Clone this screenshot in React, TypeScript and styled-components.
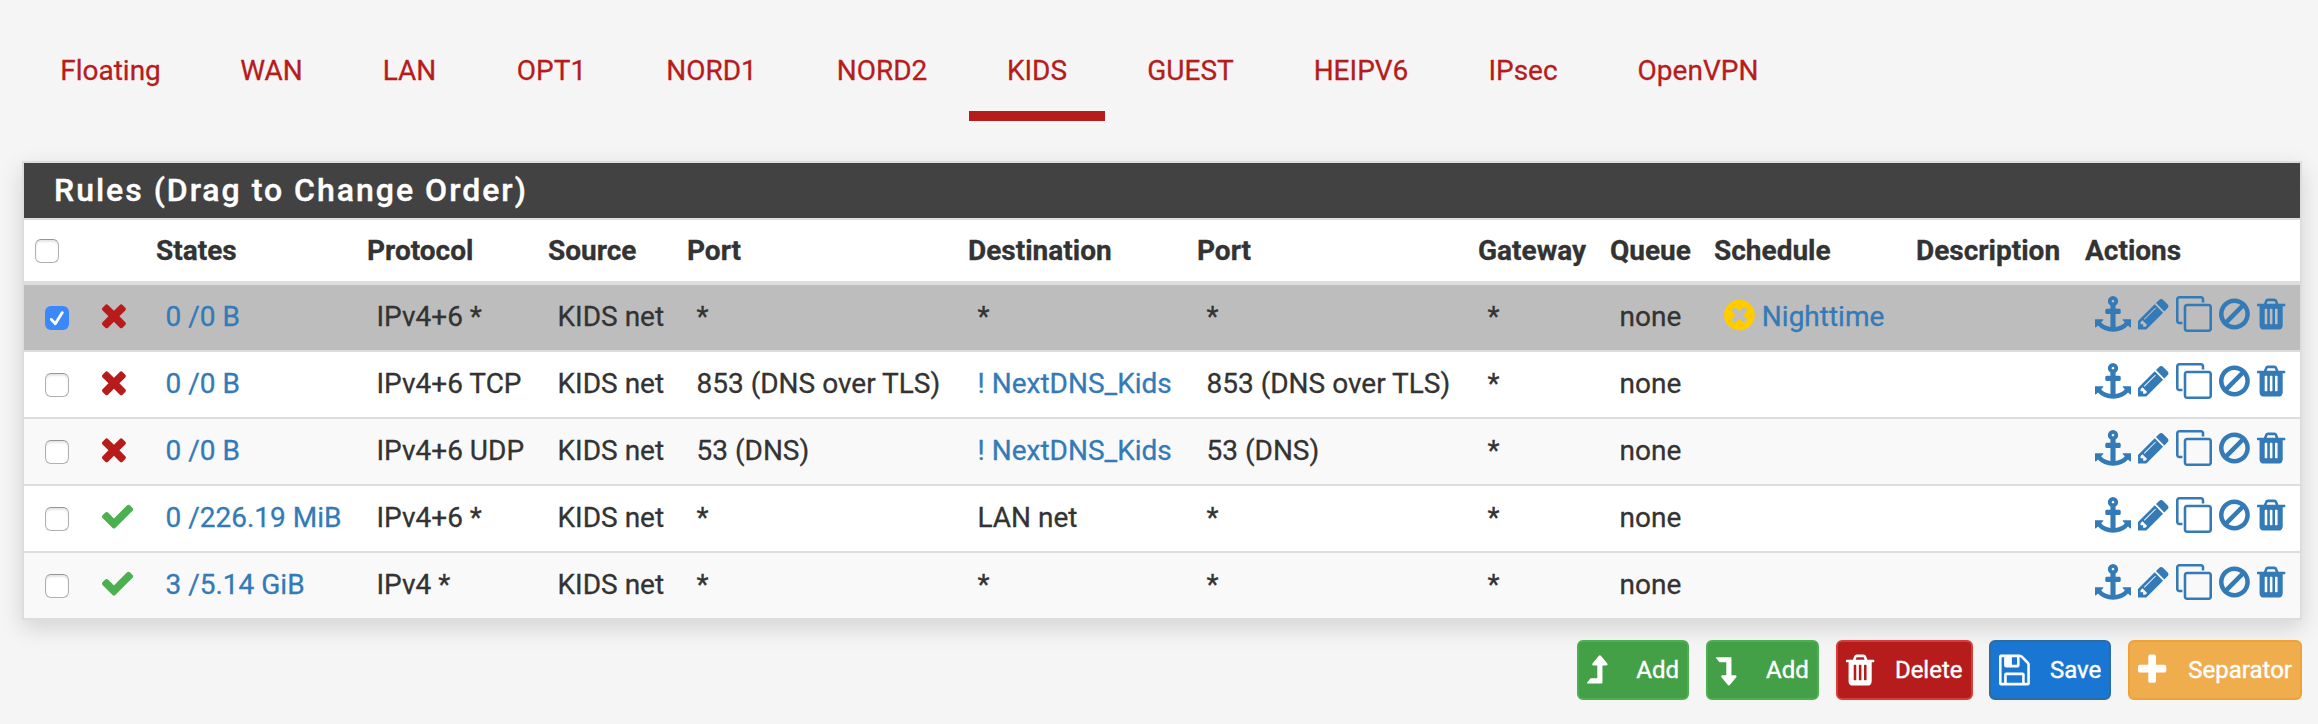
import React from 'react';
import styled, { createGlobalStyle } from 'styled-components';

const GlobalStyle = createGlobalStyle`
  * { box-sizing: border-box; }
  body {
    margin: 0;
    background: #f5f5f5;
    color: #333;
    font: 28px/40px Roboto, sans-serif;
    -webkit-text-stroke-width: 0.3px;
  }
`;

const icons = {
  anchor: 'M960 256q0-26-19-45t-45-19-45 19-19 45 19 45 45 19 45-19 19-45zm832 928v352q0 22-20 30-8 2-12 2-13 0-23-9l-93-93q-119 143-318.5 226.5t-429.5 83.5-429.5-83.5-318.5-226.5l-93 93q-9 9-23 9-4 0-12-2-20-8-20-30v-352q0-14 9-23t23-9h352q22 0 30 20 8 19-7 35l-100 100q67 91 189.5 153.5t271.5 82.5v-647h-192q-26 0-45-19t-19-45v-128q0-26 19-45t45-19h192v-163q-58-34-93-92.5t-35-128.5q0-106 75-181t181-75 181 75 75 181q0 70-35 128.5t-93 92.5v163h192q26 0 45 19t19 45v128q0 26-19 45t-45 19h-192v647q149-20 271.5-82.5t189.5-153.5l-100-100q-15-16-7-35 8-20 30-20h352q14 0 23 9t9 23z',
  pencil: 'M491 1536l91-91-235-235-91 91v107h128v128h107zm523-928q0-22-22-22-10 0-17 7l-542 542q-7 7-7 17 0 22 22 22 10 0 17-7l542-542q7-7 7-17zm-54-192l416 416-832 832h-416v-416zm683 96q0 53-37 90l-166 166-416-416 166-165q36-38 90-38 53 0 91 38l235 234q37 39 37 91z',
  clone: 'M1664 1632v-1088q0-13-9.5-22.5t-22.5-9.5h-1088q-13 0-22.5 9.5t-9.5 22.5v1088q0 13 9.5 22.5t22.5 9.5h1088q13 0 22.5-9.5t9.5-22.5zm128-1088v1088q0 66-47 113t-113 47h-1088q-66 0-113-47t-47-113v-1088q0-66 47-113t113-47h1088q66 0 113 47t47 113zm-384-384v160h-128v-160q0-13-9.5-22.5t-22.5-9.5h-1088q-13 0-22.5 9.5t-9.5 22.5v1088q0 13 9.5 22.5t22.5 9.5h160v128h-160q-66 0-113-47t-47-113v-1088q0-66 47-113t113-47h1088q66 0 113 47t47 113z',
  ban: 'M1440 893q0-161-87-295l-754 753q137 89 297 89 111 0 211.5-43.5t173.5-116.5 116-174.5 43-212.5zm-999 299l755-754q-135-91-300-91-148 0-273 73t-198 199-73 274q0 162 89 299zm1223-299q0 157-61 300t-163.5 246-245 164-298.5 61-298.5-61-245-164-163.5-246-61-300 61-299.5 163.5-245.5 245-164 298.5-61 298.5 61 245 164 163.5 245.5 61 299.5z',
  trash: 'M704 1376v-704q0-14-9-23t-23-9h-64q-14 0-23 9t-9 23v704q0 14 9 23t23 9h64q14 0 23-9t9-23zm256 0v-704q0-14-9-23t-23-9h-64q-14 0-23 9t-9 23v704q0 14 9 23t23 9h64q14 0 23-9t9-23zm256 0v-704q0-14-9-23t-23-9h-64q-14 0-23 9t-9 23v704q0 14 9 23t23 9h64q14 0 23-9t9-23zm-544-992h448l-48-117q-7-9-17-11h-317q-10 2-17 11zm928 32v64q0 14-9 23t-23 9h-96v948q0 83-47 143.5t-113 60.5h-832q-66 0-113-58.5t-47-141.5v-952h-96q-14 0-23-9t-9-23v-64q0-14 9-23t23-9h309l70-167q15-37 54-63t79-26h320q40 0 79 26t54 63l70 167h309q14 0 23 9t9 23z',
  times: 'M1490 1322q0 40-28 68l-136 136q-28 28-68 28t-68-28l-294-294-294 294q-28 28-68 28t-68-28l-136-136q-28-28-28-68t28-68l294-294-294-294q-28-28-28-68t28-68l136-136q28-28 68-28t68 28l294 294 294-294q28-28 68-28t68 28l136 136q28 28 28 68t-28 68l-294 294 294 294q28 28 28 68z',
  check: 'M1671 566q0 40-28 68l-724 724-136 136q-28 28-68 28t-68-28l-136-136-362-362q-28-28-28-68t28-68l136-136q28-28 68-28t68 28l294 295 656-657q28-28 68-28t68 28l136 136q28 28 28 68z',
  timesCircle: 'M1277 1122q0-26-19-45l-181-181 181-181q19-19 19-45 0-27-19-46l-90-90q-19-19-46-19-26 0-45 19l-181 181-181-181q-19-19-45-19-27 0-46 19l-90 90q-19 19-19 46 0 26 19 45l181 181-181 181q-19 19-19 45 0 27 19 46l90 90q19 19 46 19 26 0 45-19l181-181 181 181q19 19 45 19 27 0 46-19l90-90q19-19 19-46zm387-226q0 209-103 385.5t-279.5 279.5-385.5 103-385.5-103-279.5-279.5-103-385.5 103-385.5 279.5-279.5 385.5-103 385.5 103 279.5 279.5 103 385.5z',
  save: 'M512 1536h768v-384h-768v384zm896 0h128v-896q0-14-10-38.5t-20-34.5l-281-281q-10-10-34-20t-39-10v416q0 40-28 68t-68 28h-576q-40 0-68-28t-28-68v-416h-128v1280h128v-416q0-40 28-68t68-28h832q40 0 68 28t28 68v416zm-384-928v-320q0-13-9.5-22.5t-22.5-9.5h-192q-13 0-22.5 9.5t-9.5 22.5v320q0 13 9.5 22.5t22.5 9.5h192q13 0 22.5-9.5t9.5-22.5zm640 32v928q0 40-28 68t-68 28h-1344q-40 0-68-28t-28-68v-1344q0-40 28-68t68-28h928q40 0 88 20t76 48l280 280q28 28 48 76t20 88z',
  plus: 'M1600 736v192q0 40-28 68t-68 28h-416v416q0 40-28 68t-68 28h-192q-40 0-68-28t-28-68v-416h-416q-40 0-68-28t-28-68v-192q0-40 28-68t68-28h416v-416q0-40 28-68t68-28h192q40 0 68 28t28 68v416h416q40 0 68 28t28 68z',
  levelUp: 'M1303 635q-18 37-58 37h-192v864q0 14-9 23t-23 9h-704q-21 0-29-18-8-20 4-35l160-192q9-11 25-11h320v-640h-192q-40 0-58-37-17-37 9-68l320-384q18-22 49-22t49 22l320 384q27 32 9 68z',
  levelDown: 'M317 256h704q14 0 23 9t9 23v864h192q40 0 58 37t-10 69l-320 384q-18 22-49 22t-49-22l-320-384q-26-31-9-69 18-37 58-37h192v-640h-320q-14 0-25-11l-160-192q-13-14-4-34 9-19 29-19z',
};

type IconName = keyof typeof icons;

/* Horizontal span of each glyph inside its 1792-unit square: [left, width]. */
const spans: Record<IconName, [number, number]> = {
  anchor: [0, 1792],
  pencil: [128, 1536],
  clone: [0, 1792],
  ban: [128, 1536],
  trash: [192, 1408],
  times: [302, 1408],
  check: [121, 1792],
  timesCircle: [128, 1536],
  save: [128, 1536],
  plus: [192, 1408],
  levelUp: [284, 1024],
  levelDown: [284, 1024],
};

const Glyph = styled.svg<{ $size: number; $units: number }>`
  display: block;
  flex: none;
  overflow: visible;
  height: ${(p) => p.$size}px;
  width: ${(p) => (p.$size * p.$units) / 1792}px;
  fill: currentColor;
`;

function Icon({ name, size = 36 }: { name: IconName; size?: number }) {
  const [left, width] = spans[name];
  return (
    <Glyph $size={size} $units={width} viewBox={`${left} 0 ${width} 1792`}>
      <path d={icons[name]} />
    </Glyph>
  );
}

const Page = styled.main`
  padding: 0 16px 0 22px;
  height: 724px;
  overflow: hidden;
`;

const Tabs = styled.nav`
  display: flex;
  height: 121px;
  margin-bottom: 40px;
  padding-top: 22px;
  gap: 4px;
`;

const Tab = styled.a<{ $active?: boolean; $width: number }>`
  width: ${(p) => p.$width}px;
  padding-top: 29px;
  text-align: center;
  color: #b71c1c;
  white-space: nowrap;
  border-bottom: 10px solid ${(p) => (p.$active ? '#b71c1c' : 'transparent')};
`;

const Panel = styled.section`
  border: 2px solid #ddd;
  background: #fff;
  box-shadow: 0 8px 22px rgba(0, 0, 0, 0.14);
`;

const PanelTitle = styled.h2`
  margin: 0;
  height: 55px;
  padding-left: 30px;
  background: #424242;
  color: #fff;
  font-size: 32px;
  font-weight: 500;
  line-height: 55px;
  letter-spacing: 2px;
  -webkit-text-stroke-width: 0.4px;
`;

const Table = styled.table`
  width: 100%;
  table-layout: fixed;
  border-collapse: separate;
  border-spacing: 0;
`;

const Col = styled.col<{ $w: number }>`
  width: ${(p) => p.$w}px;
`;

const HeadCell = styled.th<{ $pad?: number }>`
  height: 65px;
  padding: 0 0 0 ${(p) => p.$pad ?? 10}px;
  border-top: 2px solid #ddd;
  border-bottom: 2px solid #ddd;
  text-align: left;
  font-weight: 700;
  white-space: nowrap;
`;

const Row = styled.tr<{ $bg: string }>`
  background: ${(p) => p.$bg};
`;

const Cell = styled.td<{ $pad?: number }>`
  height: 67px;
  padding: 0 0 2px ${(p) => p.$pad ?? 19.5}px;
  border-top: 2px solid #ddd;
  white-space: nowrap;
`;

const Link = styled.a`
  color: #337ab7;
`;

const Check = styled.span<{ $checked?: boolean; $drop: number }>`
  display: block;
  width: 24px;
  height: 24px;
  margin-top: ${(p) => p.$drop}px;
  border-radius: 6px;
  border: ${(p) => (p.$checked ? '0' : '1px solid #b0b0b0')};
  border-top-color: #949494;
  background: ${(p) => (p.$checked ? '#3b88fd' : '#fff')};
  box-shadow: ${(p) => (p.$checked ? 'none' : 'inset 0 2px 2px rgba(0, 0, 0, 0.1)')};
  svg { display: block; }
`;

const Status = styled.span<{ $pass: boolean }>`
  display: block;
  margin-top: -4px;
  color: ${(p) => (p.$pass ? '#4caf50' : '#b71c1c')};
`;

const Schedule = styled.span`
  display: flex;
  align-items: center;
  gap: 7px;
`;

const ScheduleIcon = styled.span`
  margin-top: -4px;
  color: #fc0;
`;

const Actions = styled.span`
  display: flex;
  align-items: center;
  gap: 7.1px;
  margin-top: -5px;
  color: #337ab7;
`;

const Buttons = styled.div`
  display: flex;
  justify-content: flex-end;
  gap: 16.75px;
  margin-top: 20px;
`;

const Button = styled.button<{ $bg: string; $edge: string; $w: number }>`
  display: flex;
  align-items: center;
  justify-content: space-between;
  width: ${(p) => p.$w}px;
  height: 60px;
  padding: 0 8px;
  border: 2px solid ${(p) => p.$edge};
  border-radius: 6px;
  background: ${(p) => p.$bg};
  color: #fff;
  font: 400 24px/36px Roboto, sans-serif;
  -webkit-text-stroke-width: 0.4px;
`;

const tabs: [string, number][] = [
  ['Floating', 177], ['WAN', 137], ['LAN', 131], ['OPT1', 145], ['NORD1', 167], ['NORD2', 166],
  ['KIDS', 136], ['GUEST', 163], ['HEIPV6', 170], ['IPsec', 146], ['OpenVPN', 196],
];

const columns = [58, 64, 211, 181, 139, 281, 229, 281, 132, 104, 202, 169, 225];
const heads = ['States', 'Protocol', 'Source', 'Port', 'Destination', 'Port', 'Gateway', 'Queue', 'Schedule', 'Description', 'Actions'];
const actions: IconName[] = ['anchor', 'pencil', 'clone', 'ban', 'trash'];

interface Rule {
  pass: boolean; states: string; protocol: string; source: string; port: string;
  dest: string; alias?: boolean; destPort: string; schedule?: string; selected?: boolean;
}

const rules: Rule[] = [
  { pass: false, states: '0 /0 B', protocol: 'IPv4+6 *', source: 'KIDS net', port: '*', dest: '*', destPort: '*', schedule: 'Nighttime', selected: true },
  { pass: false, states: '0 /0 B', protocol: 'IPv4+6 TCP', source: 'KIDS net', port: '853 (DNS over TLS)', dest: '! NextDNS_Kids', alias: true, destPort: '853 (DNS over TLS)' },
  { pass: false, states: '0 /0 B', protocol: 'IPv4+6 UDP', source: 'KIDS net', port: '53 (DNS)', dest: '! NextDNS_Kids', alias: true, destPort: '53 (DNS)' },
  { pass: true, states: '0 /226.19 MiB', protocol: 'IPv4+6 *', source: 'KIDS net', port: '*', dest: 'LAN net', destPort: '*' },
  { pass: true, states: '3 /5.14 GiB', protocol: 'IPv4 *', source: 'KIDS net', port: '*', dest: '*', destPort: '*' },
];

function Checkbox({ checked, drop }: { checked?: boolean; drop: number }) {
  return (
    <Check $checked={checked} $drop={drop}>
      {checked && (
        <svg width="24" height="24" viewBox="0 0 24 24">
          <path d="M6.3 13.4l4 4.4L17.3 6.6" fill="none" stroke="#fff" strokeWidth="2.8" strokeLinecap="round" strokeLinejoin="round" />
        </svg>
      )}
    </Check>
  );
}

function RuleRow({ rule, striped }: { rule: Rule; striped: boolean }) {
  return (
    <Row $bg={rule.selected ? '#bdbdbd' : striped ? '#f9f9f9' : '#fff'}>
      <Cell $pad={21}><Checkbox checked={rule.selected} drop={3} /></Cell>
      <Cell $pad={20}>
        <Status $pass={rule.pass}><Icon name={rule.pass ? 'check' : 'times'} /></Status>
      </Cell>
      <Cell><Link>{rule.states}</Link></Cell>
      <Cell>{rule.protocol}</Cell>
      <Cell>{rule.source}</Cell>
      <Cell>{rule.port}</Cell>
      <Cell>{rule.alias ? <Link>{rule.dest}</Link> : rule.dest}</Cell>
      <Cell>{rule.destPort}</Cell>
      <Cell>*</Cell>
      <Cell>none</Cell>
      <Cell $pad={20}>
        {rule.schedule && (
          <Schedule>
            <ScheduleIcon><Icon name="timesCircle" /></ScheduleIcon>
            <Link>{rule.schedule}</Link>
          </Schedule>
        )}
      </Cell>
      <Cell />
      <Cell $pad={20}>
        <Actions>{actions.map((name) => <Icon key={name} name={name} />)}</Actions>
      </Cell>
    </Row>
  );
}

export default function App() {
  return (
    <Page>
      <GlobalStyle />
      <Tabs>
        {tabs.map(([label, width]) => (
          <Tab key={label} $width={width} $active={label === 'KIDS'}>{label}</Tab>
        ))}
      </Tabs>
      <Panel>
        <PanelTitle>Rules (Drag to Change Order)</PanelTitle>
        <Table>
          <colgroup>{columns.map((w, i) => <Col key={i} $w={w} />)}</colgroup>
          <thead>
            <tr>
              <HeadCell $pad={11}><Checkbox drop={1} /></HeadCell>
              <HeadCell />
              {heads.map((h, i) => <HeadCell key={i}>{h}</HeadCell>)}
            </tr>
          </thead>
          <tbody>
            {rules.map((rule, i) => <RuleRow key={i} rule={rule} striped={i % 2 === 0} />)}
          </tbody>
        </Table>
      </Panel>
      <Buttons>
        <Button $bg="#43a047" $edge="#4caf50" $w={112}><Icon name="levelUp" />Add</Button>
        <Button $bg="#43a047" $edge="#4caf50" $w={113}><Icon name="levelDown" />Add</Button>
        <Button $bg="#b71c1c" $edge="#d43f3a" $w={137}><Icon name="trash" />Delete</Button>
        <Button $bg="#1976d2" $edge="#2e6da4" $w={122}><Icon name="save" />Save</Button>
        <Button $bg="#f0ad4e" $edge="#eea236" $w={174}><Icon name="plus" />Separator</Button>
      </Buttons>
    </Page>
  );
}
